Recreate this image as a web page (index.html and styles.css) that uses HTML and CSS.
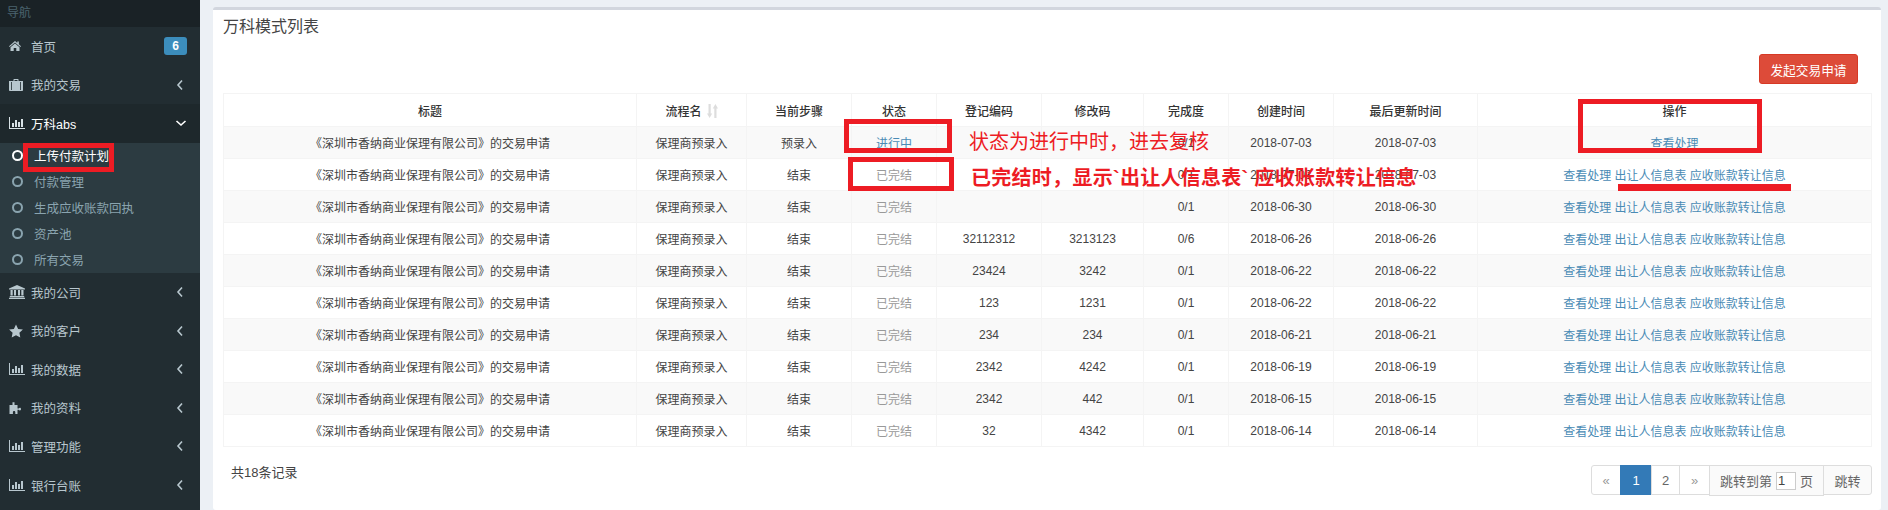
FILE: index.html
```html
<!DOCTYPE html>
<html lang="zh-CN">
<head>
  <meta charset="UTF-8" />
  <title>万科模式列表</title>
  <link rel="stylesheet" href="styles.css">
</head>
<body>
  <aside class="sidebar">
    <div class="nav-header">导航</div>
    <ul class="menu">
      <li class="menu-item">
        <svg class="icon" viewBox="0 0 16 14"><path d="M6 2 0 7.300l.7.8L6 3.600l5.300 4.500.7-.8L9.800 5.300V2.600H8.300v1.400zM1.500 8.300V12h3.200V9h2.600v3h3.200V8.300L6 4.500z"/></svg>
        <span class="label">首页</span>
        <span class="badge">6</span>
      </li>
      <li class="menu-item">
        <svg class="icon" viewBox="0 0 16 14"><path d="M4.500 3V1.500c0-.3.2-.5.5-.5h4c.3 0 .5.200.5.500V3H14v9c0 .5-.3 1-1 1H1c-.7 0-1-.5-1-1V3zm1-1v1h3V2zM2 4v8h.8V4zm9.200 0v8h.8V4z"/></svg>
        <span class="label">我的交易</span>
        <svg class="chevron" viewBox="0 0 8 12"><path d="M6 1.500 2 6l4 4.500"/></svg>
      </li>
      <li class="menu-item is-open">
        <svg class="icon" viewBox="0 0 16 14"><path d="M0 1h1v11h15v1H0zM3 7h2v4H3zM6 4h2v7H6zM9 6h2v5H9zM12 3h2v8h-2z"/></svg>
        <span class="label">万科abs</span>
        <svg class="chevron" viewBox="0 0 12 8"><path d="M1.500 2 6 6l4.500-4"/></svg>
      </li>
      <li>
        <ul class="submenu">
          <li class="sub-item is-current"><i class="ring"></i>上传付款计划</li>
          <li class="sub-item"><i class="ring"></i>付款管理</li>
          <li class="sub-item"><i class="ring"></i>生成应收账款回执</li>
          <li class="sub-item"><i class="ring"></i>资产池</li>
          <li class="sub-item"><i class="ring"></i>所有交易</li>
        </ul>
      </li>
      <li class="menu-item">
        <svg class="icon" viewBox="0 0 16 14"><path d="M8 0 16 3.500V4.500H0V3.500zM1.500 5h2.200v5.500H1.500zM5 5h2v5.500H5zM9 5h2v5.500H9zM12.300 5h2.200v5.500h-2.200zM.8 11h14.400v1.200H.8zM0 12.700h16V14H0z"/></svg>
        <span class="label">我的公司</span>
        <svg class="chevron" viewBox="0 0 8 12"><path d="M6 1.500 2 6l4 4.500"/></svg>
      </li>
      <li class="menu-item">
        <svg class="icon" viewBox="0 0 16 14"><path d="M7 .5 9.100 4.900 13.900 5.500 10.400 8.800 11.300 13.500 7 11.200 2.700 13.500 3.600 8.800.1 5.500 4.900 4.900z"/></svg>
        <span class="label">我的客户</span>
        <svg class="chevron" viewBox="0 0 8 12"><path d="M6 1.500 2 6l4 4.500"/></svg>
      </li>
      <li class="menu-item">
        <svg class="icon" viewBox="0 0 16 14"><path d="M0 1h1v11h15v1H0zM3 7h2v4H3zM6 4h2v7H6zM9 6h2v5H9zM12 3h2v8h-2z"/></svg>
        <span class="label">我的数据</span>
        <svg class="chevron" viewBox="0 0 8 12"><path d="M6 1.500 2 6l4 4.500"/></svg>
      </li>
      <li class="menu-item">
        <svg class="icon" viewBox="0 0 16 14"><path d="M3.500 1.200h2V4h3v3.500h1.200c.3-.6.7-.8 1.200-.8.800 0 1.100.6 1.100 1.400s-.3 1.400-1.100 1.400c-.5 0-.9-.3-1.200-.8H8.500V13H6.300v-1.700c0-.7-.5-1.200-1.200-1.200s-1.200.5-1.200 1.200V13H.5V4h3z"/></svg>
        <span class="label">我的资料</span>
        <svg class="chevron" viewBox="0 0 8 12"><path d="M6 1.500 2 6l4 4.500"/></svg>
      </li>
      <li class="menu-item">
        <svg class="icon" viewBox="0 0 16 14"><path d="M0 1h1v11h15v1H0zM3 7h2v4H3zM6 4h2v7H6zM9 6h2v5H9zM12 3h2v8h-2z"/></svg>
        <span class="label">管理功能</span>
        <svg class="chevron" viewBox="0 0 8 12"><path d="M6 1.500 2 6l4 4.500"/></svg>
      </li>
      <li class="menu-item">
        <svg class="icon" viewBox="0 0 16 14"><path d="M0 1h1v11h15v1H0zM3 7h2v4H3zM6 4h2v7H6zM9 6h2v5H9zM12 3h2v8h-2z"/></svg>
        <span class="label">银行台账</span>
        <svg class="chevron" viewBox="0 0 8 12"><path d="M6 1.500 2 6l4 4.500"/></svg>
      </li>
    </ul>
  </aside>

  <main class="content">
    <section class="box">
      <h3 class="box-title">万科模式列表</h3>
      <div class="toolbar">
        <button class="btn-danger" type="button">发起交易申请</button>
      </div>

      <table class="list">
        <colgroup>
          <col class="c-title"><col class="c-flow"><col class="c-step"><col class="c-state"><col class="c-code">
          <col class="c-edit"><col class="c-done"><col class="c-date"><col class="c-update"><col>
        </colgroup>
        <thead>
          <tr>
            <th>标题</th>
            <th>流程名<svg class="sort" viewBox="0 0 11 14"><path d="M1.500 0h2.200v9.500h1.500L2.600 14 0 9.500h1.500zM7.300 14V4.500H5.800L8.400 0 11 4.500H9.500V14z"/></svg></th>
            <th>当前步骤</th>
            <th>状态</th>
            <th>登记编码</th>
            <th>修改码</th>
            <th>完成度</th>
            <th>创建时间</th>
            <th>最后更新时间</th>
            <th>操作</th>
          </tr>
        </thead>
        <tbody>
          <tr>
            <td>《深圳市香纳商业保理有限公司》的交易申请</td><td>保理商预录入</td><td>预录入</td>
            <td><a href="#">进行中</a></td><td></td><td></td><td>0/1</td><td>2018-07-03</td><td>2018-07-03</td>
            <td><a href="#">查看处理</a></td>
          </tr>
          <tr>
            <td>《深圳市香纳商业保理有限公司》的交易申请</td><td>保理商预录入</td><td>结束</td>
            <td class="muted">已完结</td><td></td><td></td><td>0/1</td><td>2018-07-03</td><td>2018-07-03</td>
            <td><a href="#">查看处理</a> <a href="#">出让人信息表</a> <a href="#">应收账款转让信息</a></td>
          </tr>
          <tr>
            <td>《深圳市香纳商业保理有限公司》的交易申请</td><td>保理商预录入</td><td>结束</td>
            <td class="muted">已完结</td><td></td><td></td><td>0/1</td><td>2018-06-30</td><td>2018-06-30</td>
            <td><a href="#">查看处理</a> <a href="#">出让人信息表</a> <a href="#">应收账款转让信息</a></td>
          </tr>
          <tr>
            <td>《深圳市香纳商业保理有限公司》的交易申请</td><td>保理商预录入</td><td>结束</td>
            <td class="muted">已完结</td><td>32112312</td><td>3213123</td><td>0/6</td><td>2018-06-26</td><td>2018-06-26</td>
            <td><a href="#">查看处理</a> <a href="#">出让人信息表</a> <a href="#">应收账款转让信息</a></td>
          </tr>
          <tr>
            <td>《深圳市香纳商业保理有限公司》的交易申请</td><td>保理商预录入</td><td>结束</td>
            <td class="muted">已完结</td><td>23424</td><td>3242</td><td>0/1</td><td>2018-06-22</td><td>2018-06-22</td>
            <td><a href="#">查看处理</a> <a href="#">出让人信息表</a> <a href="#">应收账款转让信息</a></td>
          </tr>
          <tr>
            <td>《深圳市香纳商业保理有限公司》的交易申请</td><td>保理商预录入</td><td>结束</td>
            <td class="muted">已完结</td><td>123</td><td>1231</td><td>0/1</td><td>2018-06-22</td><td>2018-06-22</td>
            <td><a href="#">查看处理</a> <a href="#">出让人信息表</a> <a href="#">应收账款转让信息</a></td>
          </tr>
          <tr>
            <td>《深圳市香纳商业保理有限公司》的交易申请</td><td>保理商预录入</td><td>结束</td>
            <td class="muted">已完结</td><td>234</td><td>234</td><td>0/1</td><td>2018-06-21</td><td>2018-06-21</td>
            <td><a href="#">查看处理</a> <a href="#">出让人信息表</a> <a href="#">应收账款转让信息</a></td>
          </tr>
          <tr>
            <td>《深圳市香纳商业保理有限公司》的交易申请</td><td>保理商预录入</td><td>结束</td>
            <td class="muted">已完结</td><td>2342</td><td>4242</td><td>0/1</td><td>2018-06-19</td><td>2018-06-19</td>
            <td><a href="#">查看处理</a> <a href="#">出让人信息表</a> <a href="#">应收账款转让信息</a></td>
          </tr>
          <tr>
            <td>《深圳市香纳商业保理有限公司》的交易申请</td><td>保理商预录入</td><td>结束</td>
            <td class="muted">已完结</td><td>2342</td><td>442</td><td>0/1</td><td>2018-06-15</td><td>2018-06-15</td>
            <td><a href="#">查看处理</a> <a href="#">出让人信息表</a> <a href="#">应收账款转让信息</a></td>
          </tr>
          <tr>
            <td>《深圳市香纳商业保理有限公司》的交易申请</td><td>保理商预录入</td><td>结束</td>
            <td class="muted">已完结</td><td>32</td><td>4342</td><td>0/1</td><td>2018-06-14</td><td>2018-06-14</td>
            <td><a href="#">查看处理</a> <a href="#">出让人信息表</a> <a href="#">应收账款转让信息</a></td>
          </tr>
        </tbody>
      </table>

      <div class="list-footer">
        <span class="total">共18条记录</span>
        <nav class="pager">
          <a class="page page-prev" href="#">«</a>
          <a class="page page-on" href="#">1</a>
          <a class="page page-two" href="#">2</a>
          <a class="page page-next" href="#">»</a>
          <span class="page page-jump">跳转到第<input class="page-input" type="text" value="1">页</span>
          <a class="page page-go" href="#">跳转</a>
        </nav>
      </div>
    </section>
  </main>

  <!-- red marks drawn over the screenshot -->
  <div class="mark mark-menu"></div>
  <div class="mark mark-state1"></div>
  <div class="mark mark-state2"></div>
  <div class="mark mark-action"></div>
  <div class="mark-line"></div>
  <p class="note note-one">状态为进行中时，进去复核</p>
  <p class="note note-two">已完结时，显示`出让人信息表` 应收账款转让信息</p>
</body>
</html>
```

FILE: styles.css
```css
:root {
  --side-bg: #222d32;
  --side-dark: #1a2226;
  --side-open: #1e282c;
  --side-sub: #2c3b41;
  --side-text: #b8c7ce;
  --side-sub-text: #8aa4af;
  --page-bg: #ecf0f5;
  --line: #f4f4f4;
  --link: #3c8dbc;
  --mark: #ed1c24;
}
* {
  box-sizing: border-box;
}
html, body {
  height: 510px;
  margin: 0;
  overflow: hidden;
}
body {
  display: flex;
  position: relative;
  background: var(--page-bg);
  color: #444;
  font-family: "Liberation Sans", "Noto Sans CJK SC", sans-serif;
  font-size: 12px;
}
ul {
  list-style: none;
  margin: 0;
  padding: 0;
}
a {
  color: #4a8bb5;
  text-decoration: none;
}

/* sidebar */
.sidebar {
  flex: 0 0 200px;
  background: var(--side-bg);
  color: var(--side-text);
  font-size: 12.5px;
}
.nav-header {
  height: 27px;
  padding: 3px 7px;
  background: var(--side-dark);
  color: #4b646f;
  font-size: 12px;
}
.menu-item {
  display: flex;
  align-items: center;
  height: 38.6px;
  padding: 0 13px 0 9px;
}
.menu-item.is-open {
  background: var(--side-open);
  color: #fff;
}
.icon {
  flex: 0 0 16px;
  width: 16px;
  height: 14px;
  margin-right: 6px;
  fill: currentColor;
}
.is-open .icon {
  color: #d8e2e6;
}
.label {
  flex: 1;
}
.chevron {
  width: 8px;
  height: 12px;
  margin-right: 3px;
  fill: none;
  stroke: currentColor;
  stroke-width: 1.6;
}
.is-open .chevron {
  width: 12px;
  height: 8px;
  margin-right: 0;
}
.badge {
  width: 23px;
  height: 18px;
  border-radius: 3px;
  background: var(--link);
  color: #fff;
  font-size: 12px;
  font-weight: bold;
  line-height: 18px;
  text-align: center;
}
.submenu {
  background: var(--side-sub);
}
.sub-item {
  display: flex;
  align-items: center;
  height: 26px;
  padding-left: 12px;
  color: var(--side-sub-text);
}
.sub-item.is-current {
  color: #fff;
}
.ring {
  width: 11px;
  height: 11px;
  margin-right: 11px;
  border: 2px solid currentColor;
  border-radius: 50%;
}

/* main box */
.content {
  flex: 1;
  padding: 7px 7px 0 13px;
}
.box {
  height: 503px;
  padding: 0 9px 0 10px;
  border-top: 3px solid #d2d6de;
  border-radius: 3px;
  background: #fff;
}
.box-title {
  height: 33px;
  margin: 0;
  color: #444;
  font-size: 16px;
  font-weight: normal;
  line-height: 34px;
}
.toolbar {
  display: flex;
  justify-content: flex-end;
  height: 50px;
  padding: 11px 14px 0 0;
}
.btn-danger {
  width: 99px;
  height: 30px;
  padding: 0;
  border: 1px solid #d73925;
  border-radius: 3px;
  background: #dd4b39;
  color: #fff;
  font-family: inherit;
  font-size: 12.7px;
}

/* table */
.list {
  width: 1649px;
  border: 1px solid var(--line);
  border-collapse: collapse;
  table-layout: fixed;
  text-align: center;
}
.c-title { width: 413px; }
.c-flow { width: 110px; }
.c-step { width: 105px; }
.c-state { width: 85px; }
.c-code { width: 105px; }
.c-edit { width: 102px; }
.c-done { width: 85px; }
.c-date { width: 105px; }
.c-update { width: 144px; }
.list th, .list td {
  padding: 0;
  border: 1px solid var(--line);
}
.list th {
  color: #333;
  font-weight: 500;
}
.list thead tr {
  height: 33px;
}
.list tbody tr {
  height: 32px;
}
.list tbody tr:nth-child(odd) {
  background: #f9f9f9;
}
.muted {
  color: #999;
}
.sort {
  width: 11px;
  height: 14px;
  margin-left: 5px;
  fill: #ddd;
  vertical-align: -2px;
}

/* footer */
.list-footer {
  display: flex;
  justify-content: space-between;
  margin-top: 18px;
}
.total {
  padding-left: 8px;
  font-size: 13px;
  line-height: 15px;
}
.pager {
  display: flex;
  font-size: 13px;
}
.page {
  display: flex;
  align-items: center;
  justify-content: center;
  height: 30px;
  margin-left: -1px;
  border: 1px solid #ddd;
  background: #fff;
  color: #666;
}
.page-prev {
  width: 30px;
  margin-left: 0;
  border-radius: 3px 0 0 3px;
  color: #999;
}
.page-on {
  width: 32px;
  border-color: #337ab7;
  background: #337ab7;
  color: #fff;
}
.page-two { width: 29px; }
.page-next { width: 31px; color: #999; }
.page-jump {
  width: 115px;
  height: 31px;
  background: #fafafa;
}
.page-go {
  width: 49px;
  border-radius: 0 3px 3px 0;
  background: #fafafa;
}
.page-input {
  width: 20px;
  height: 18px;
  margin: 0 4px;
  padding: 0 0 0 1px;
  border: 1px solid #ccc;
  color: #444;
  font-family: inherit;
  font-size: 13px;
}

/* annotations over the page */
.mark {
  position: absolute;
  border: 5px solid var(--mark);
}
.mark-menu { left: 23px; top: 143px; width: 91px; height: 29px; }
.mark-state1 { left: 844px; top: 119px; width: 108px; height: 34px; }
.mark-state2 { left: 848px; top: 157px; width: 106px; height: 34px; }
.mark-action { left: 1578px; top: 99px; width: 184px; height: 54px; }
.mark-line {
  position: absolute;
  left: 1618px;
  top: 184px;
  width: 173px;
  height: 7px;
  background: var(--mark);
}
.note {
  position: absolute;
  margin: 0;
  color: var(--mark);
  font-size: 20px;
  line-height: 24px;
  white-space: nowrap;
}
.note-one { left: 969px; top: 130px; }
.note-two { left: 971px; top: 166px; font-weight: bold; letter-spacing: 0.28px; }
```
